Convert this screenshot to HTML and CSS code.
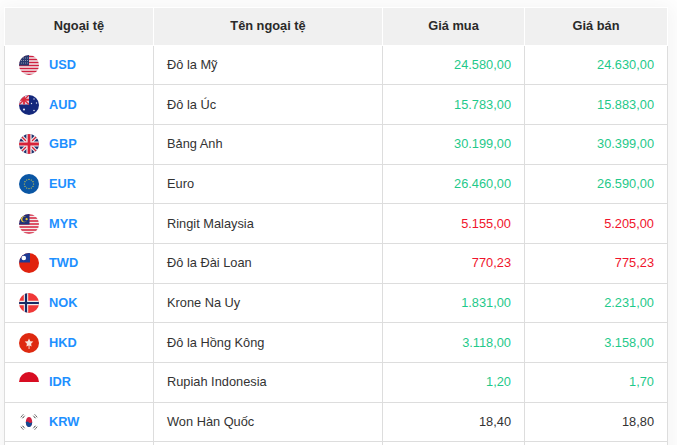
FILE: index.html
```html
<!DOCTYPE html>
<html lang="vi">
<head>
<meta charset="utf-8">
<title>Tỷ giá ngoại tệ</title>
<link rel="stylesheet" href="styles.css">
</head>
<body>
<div class="wrap">
<table class="rates">
<colgroup><col class="c1"><col class="c2"><col class="c3"><col class="c4"></colgroup>
<thead><tr><th>Ngoại tệ</th><th>Tên ngoại tệ</th><th>Giá mua</th><th>Giá bán</th></tr></thead>
<tbody>
<tr><td><div class="cur"><svg class="flag" viewBox="0 0 20 20"><defs><clipPath id="c1"><circle cx="10" cy="10" r="10"/></clipPath></defs><g clip-path="url(#c1)"><rect width="20" height="20" fill="#f0eef0"/><path d="M0 1.500h20M0 4.500h20M0 7.500h20M0 10.500h20M0 13.500h20M0 16.500h20M0 19.500h20" stroke="#d0203f" stroke-width="1.500"/><rect width="10" height="10.500" fill="#26386e"/><path d="M2 3h7M2 5.500h7M2 8h7" stroke="#aab" stroke-width=".8" stroke-dasharray="1 1"/></g></svg><a class="code">USD</a></div></td><td>Đô la Mỹ</td><td class="num up">24.580,00</td><td class="num up">24.630,00</td></tr>
<tr><td><div class="cur"><svg class="flag" viewBox="0 0 20 20"><defs><clipPath id="c2"><circle cx="10" cy="10" r="10"/></clipPath></defs><g clip-path="url(#c2)"><rect width="20" height="20" fill="#14287c"/><rect width="10" height="9.500" fill="#e8c8d4"/><path d="M0 0l10 9.500M10 0L0 9.500" stroke="#d8283c" stroke-width="1.200"/><path d="M5 0v9.500M0 4.750h10" stroke="#d8283c" stroke-width="1.800"/><g fill="#dfe4f4"><circle cx="5" cy="14.500" r="1.100"/><circle cx="15" cy="4" r=".7"/><circle cx="12.500" cy="8.500" r=".7"/><circle cx="17.500" cy="8" r=".7"/><circle cx="15" cy="15.500" r=".8"/></g></g></svg><a class="code">AUD</a></div></td><td>Đô la Úc</td><td class="num up">15.783,00</td><td class="num up">15.883,00</td></tr>
<tr><td><div class="cur"><svg class="flag" viewBox="0 0 20 20"><defs><clipPath id="c3"><circle cx="10" cy="10" r="10"/></clipPath></defs><g clip-path="url(#c3)"><rect width="20" height="20" fill="#1c2f6c"/><path d="M0 0l20 20M20 0L0 20" stroke="#eee" stroke-width="3.600"/><path d="M0 0l20 20M20 0L0 20" stroke="#d62238" stroke-width="1.300"/><path d="M10 0v20M0 10h20" stroke="#f4f4f4" stroke-width="5.200"/><path d="M10 0v20M0 10h20" stroke="#d62238" stroke-width="2.800"/></g></svg><a class="code">GBP</a></div></td><td>Bảng Anh</td><td class="num up">30.199,00</td><td class="num up">30.399,00</td></tr>
<tr><td><div class="cur"><svg class="flag" viewBox="0 0 20 20"><circle cx="10" cy="10" r="10" fill="#0a56a4"/><g fill="#e8d23c"><circle cx="10" cy="5.400" r=".6"/><circle cx="12.300" cy="6" r=".6"/><circle cx="14" cy="7.700" r=".6"/><circle cx="14.600" cy="10" r=".6"/><circle cx="14" cy="12.300" r=".6"/><circle cx="12.300" cy="14" r=".6"/><circle cx="10" cy="14.600" r=".6"/><circle cx="7.700" cy="14" r=".6"/><circle cx="6" cy="12.300" r=".6"/><circle cx="5.400" cy="10" r=".6"/><circle cx="6" cy="7.700" r=".6"/><circle cx="7.700" cy="6" r=".6"/></g></svg><a class="code">EUR</a></div></td><td>Euro</td><td class="num up">26.460,00</td><td class="num up">26.590,00</td></tr>
<tr><td><div class="cur"><svg class="flag" viewBox="0 0 20 20"><defs><clipPath id="c5"><circle cx="10" cy="10" r="10"/></clipPath></defs><g clip-path="url(#c5)"><rect width="20" height="20" fill="#f2eeee"/><path d="M0 1h20M0 4h20M0 7h20M0 10h20M0 13h20M0 16h20M0 19h20" stroke="#d6203c" stroke-width="1.500"/><rect width="10.500" height="10.500" fill="#1f3078"/><circle cx="5" cy="5.200" r="3" fill="#f2cc30"/><circle cx="6" cy="5.200" r="2.600" fill="#1f3078"/><circle cx="7.600" cy="5.200" r="1.100" fill="#f2cc30"/></g></svg><a class="code">MYR</a></div></td><td>Ringit Malaysia</td><td class="num down">5.155,00</td><td class="num down">5.205,00</td></tr>
<tr><td><div class="cur"><svg class="flag" viewBox="0 0 20 20"><defs><clipPath id="c6"><circle cx="10" cy="10" r="10"/></clipPath></defs><g clip-path="url(#c6)"><rect width="20" height="20" fill="#e0220e"/><rect width="11" height="9.500" fill="#1c3a94"/><circle cx="4.800" cy="5" r="2.300" fill="#fff"/></g></svg><a class="code">TWD</a></div></td><td>Đô la Đài Loan</td><td class="num down">770,23</td><td class="num down">775,23</td></tr>
<tr><td><div class="cur"><svg class="flag" viewBox="0 0 20 20"><defs><clipPath id="c7"><circle cx="10" cy="10" r="10"/></clipPath></defs><g clip-path="url(#c7)"><rect width="20" height="20" fill="#f03838"/><path d="M7 0v20M0 10h20" stroke="#eee" stroke-width="4.400"/><path d="M7 0v20M0 10h20" stroke="#142a66" stroke-width="2.200"/></g></svg><a class="code">NOK</a></div></td><td>Krone Na Uy</td><td class="num up">1.831,00</td><td class="num up">2.231,00</td></tr>
<tr><td><div class="cur"><svg class="flag" viewBox="0 0 20 20"><circle cx="10" cy="10" r="10" fill="#de2910"/><path d="M10 5.500L11.300 8.200 14.300 8.600 12.100 10.700 12.600 13.600 10.500 12.600V16H9.600V12.500L7.400 13.600 7.900 10.700 5.700 8.600 8.700 8.200z" fill="#f8e4dc"/></svg><a class="code">HKD</a></div></td><td>Đô la Hồng Kông</td><td class="num up">3.118,00</td><td class="num up">3.158,00</td></tr>
<tr><td><div class="cur"><svg class="flag" viewBox="0 0 20 20"><defs><clipPath id="c9"><circle cx="10" cy="10" r="10"/></clipPath></defs><g clip-path="url(#c9)"><rect width="20" height="10" fill="#d80d22"/></g></svg><a class="code">IDR</a></div></td><td>Rupiah Indonesia</td><td class="num up">1,20</td><td class="num up">1,70</td></tr>
<tr><td><div class="cur"><svg class="flag" viewBox="0 0 20 20"><ellipse cx="10" cy="10" rx="3.200" ry="5" fill="#d02240"/><path d="M6.800 10c1.200-1 2.200-.6 3.200.4s2.200 1 3.200-.4c0 3-1.400 5-3.200 5s-3.200-2-3.200-5z" fill="#124a94"/><path d="M4.200 2.500l-2.400 2.800M5.600 3.800l-2.400 2.800M15.800 2.500l2.400 2.800M14.400 3.800l2.400 2.800M4.200 17.500l-2.400-2.800M5.600 16.200l-2.400-2.800M15.800 17.500l2.400-2.800M14.400 16.200l2.400-2.800" stroke="#222" stroke-width="1" stroke-dasharray="1.200 .5"/></svg><a class="code">KRW</a></div></td><td>Won Hàn Quốc</td><td class="num">18,40</td><td class="num">18,80</td></tr>
<tr><td></td><td></td><td></td><td></td></tr>
</tbody>
</table>
</div>
</body>
</html>
```

FILE: styles.css
```css
html, body {
  margin: 0;
  padding: 0;
  height: 445px;
  overflow: hidden;
  background: #fff;
}
.wrap {
  padding: 7px 9px 0 4px;
}
.rates {
  width: 664px;
  border-collapse: collapse;
  table-layout: fixed;
  font-family: "Liberation Sans", Arial, sans-serif;
  font-size: 12.8px;
  color: #333;
  box-shadow: 0 3px 20px 6px rgba(0, 0, 0, 0.045);
}
.c1 { width: 149px; }
.c2 { width: 229px; }
.c3 { width: 142px; }
.c4 { width: 143px; }
th {
  height: 37.6px;
  padding: 0 0 2px;
  box-sizing: border-box;
  background: #f0f0f0;
  border: 1px solid #fff;
  font-weight: 700;
  color: #2a2a2a;
  text-align: center;
}
td {
  height: 37.67px;
  padding: 0 12px 1px 13px;
  border: 1px solid #ddd;
  background: #fff;
}
.cur {
  display: flex;
  align-items: center;
  gap: 10px;
  padding-left: 1px;
}
.flag {
  width: 20px;
  height: 20px;
  flex: none;
  position: relative;
  top: 0.5px;
}
.code {
  font-weight: 700;
  color: #1e90ff;
}
td.num {
  text-align: right;
  padding-right: 13px;
}
.up { color: #1fc98a; }
.down { color: #f0142c; }
```
